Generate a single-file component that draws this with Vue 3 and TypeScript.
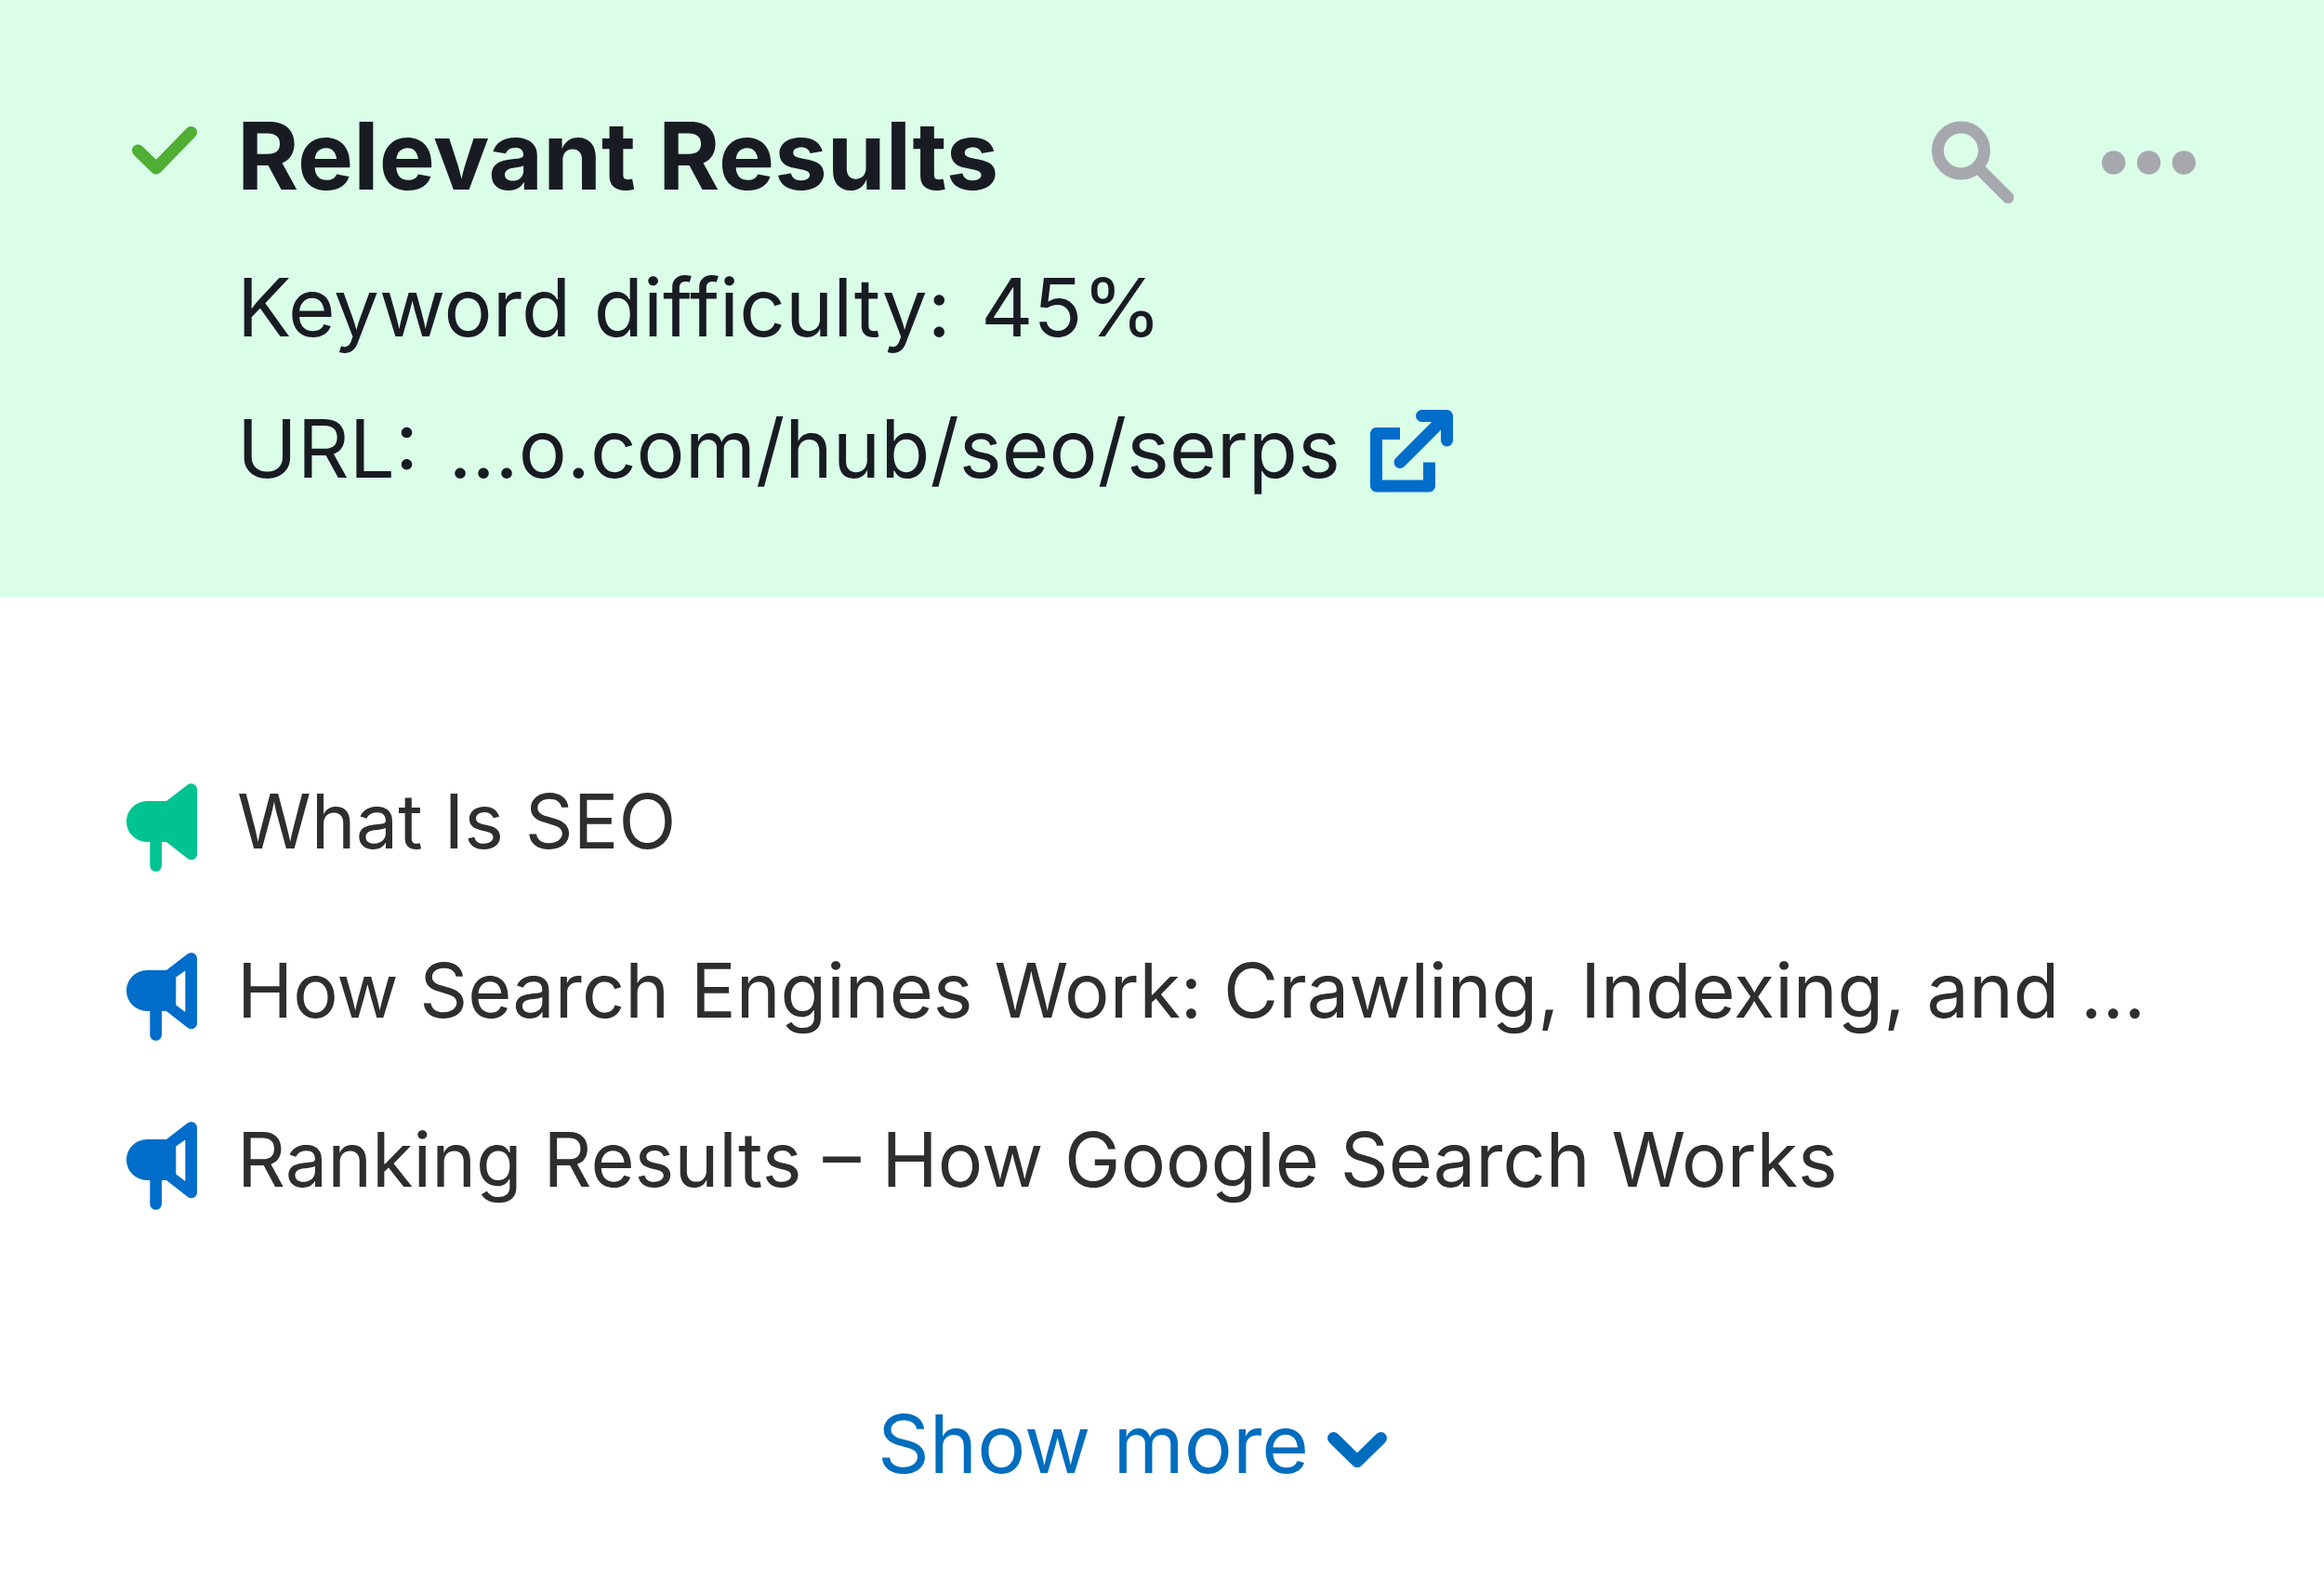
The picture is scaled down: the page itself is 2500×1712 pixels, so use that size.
<script setup lang="ts">
interface ResultItem {
  title: string
  filled: boolean
}

const items: ResultItem[] = [
  { title: 'What Is SEO', filled: true },
  { title: 'How Search Engines Work: Crawling, Indexing, and ...', filled: false },
  { title: 'Ranking Results – How Google Search Works', filled: false },
]
</script>

<template>
  <main class="card">
    <header class="head">
      <svg class="check" width="70" height="52" viewBox="0 0 70 52" aria-hidden="true">
        <path d="M6.5 26 26 45 63.500 6.500" />
      </svg>
      <div class="info">
        <h1>Relevant Results</h1>
        <p><span class="label">Keyword difficulty:</span> <span>45%</span></p>
        <p class="url">
          <span><span class="label">URL:</span> <span>...o.com/hub/seo/serps</span></span>
          <a href="#" aria-label="Open page">
            <svg width="89" height="89" viewBox="0 0 89 89" aria-hidden="true">
              <path class="frame" d="M32 25.500H6.500V82H63.500V56.500" />
              <path class="arrow" d="M32 56.500 82 6.500M55.500 6.500H82.500V33" />
            </svg>
          </a>
        </p>
      </div>
      <div class="actions">
        <button type="button" aria-label="Search">
          <svg class="search" width="89" height="90" viewBox="0 0 89 90" aria-hidden="true">
            <circle cx="31.500" cy="32" r="25" />
            <path d="M50 50.500 82 82.500" />
          </svg>
        </button>
        <button type="button" aria-label="More options">
          <svg class="dots" width="101" height="26" viewBox="0 0 101 26" aria-hidden="true">
            <circle cx="12.700" cy="13" r="12.700" />
            <circle cx="50.500" cy="13" r="12.700" />
            <circle cx="88.300" cy="13" r="12.700" />
          </svg>
        </button>
      </div>
    </header>

    <ul class="list">
      <li v-for="item in items" :key="item.title" :class="{ filled: item.filled }">
        <svg class="horn" width="76" height="95" viewBox="0 0 76 95" aria-hidden="true">
          <path d="M22 19H43L66 1.300C70-1.500 76 1 76 6.500V76C76 81.500 70 84 66 81L43 63H38V88.500A6.350 6.350 0 0 1 25.300 88.500V63H22A22 22 0 0 1 22 19Z" />
          <path v-if="!item.filled" class="hole" d="M53.300 26.500 63.300 19.500V64L53.300 56.500Z" />
        </svg>
        <span>{{ item.title }}</span>
      </li>
    </ul>

    <footer class="foot">
      <button class="more" type="button">
        <span>Show more</span>
        <svg width="64" height="39" viewBox="0 0 64 39" aria-hidden="true">
          <path d="M6.500 6.500 32 31.500 57.500 6.500" />
        </svg>
      </button>
    </footer>
  </main>
</template>

<style>
body {
  margin: 0;
  background: #fff;
}
</style>

<style scoped>
.card {
  font-family: Inter, sans-serif;
  font-weight: 400;
  color: #191b23;
}

svg {
  display: block;
  flex: none;
}

button {
  padding: 0;
  border: 0;
  background: none;
  font: inherit;
  cursor: pointer;
}

.head {
  display: flex;
  align-items: flex-start;
  padding: 107px 138px 84px 142px;
  background: #dafee8;
}

.check {
  margin: 29px 43px 0 0;
  fill: none;
  stroke: #4fae33;
  stroke-width: 13;
  stroke-linecap: round;
  stroke-linejoin: round;
}

.info {
  flex: 1;
}

h1 {
  margin: 0 0 28px;
  font-size: 101px;
  line-height: 120px;
  font-weight: 700;
}

p {
  margin: 0;
  font-size: 87px;
  line-height: 152px;
}

.label {
  margin-right: 8px;
}

.url {
  display: flex;
  align-items: center;
  gap: 32px;
}

.url a {
  margin-top: 4px;
}

.url path {
  fill: none;
  stroke: #006dca;
  stroke-width: 13;
  stroke-linejoin: round;
}

.url .arrow {
  stroke-linecap: round;
}

.actions {
  display: flex;
  align-items: center;
  gap: 94px;
  padding-top: 23px;
}

.search {
  fill: none;
  stroke: #a7a8ae;
  stroke-width: 13;
  stroke-linecap: round;
}

.dots {
  fill: #a7a8ae;
}

.list {
  margin: 0;
  padding: 150px 0 0 136px;
  list-style: none;
  color: #2e2e2f;
}

.list li {
  display: flex;
  align-items: center;
  gap: 43px;
  font-size: 81px;
  line-height: 182px;
  white-space: nowrap;
}

.horn {
  margin-top: 13px;
  fill: #006dca;
}

.filled .horn {
  fill: #00c392;
}

.horn .hole {
  fill: #fff;
}

.foot {
  display: flex;
  justify-content: center;
  padding: 155px 64px 98px 0;
}

.more {
  display: flex;
  align-items: center;
  gap: 20px;
  color: #006dbf;
  font-size: 87px;
  line-height: 120px;
}

.more svg {
  margin-top: 12px;
  fill: none;
  stroke: currentColor;
  stroke-width: 13;
  stroke-linecap: round;
  stroke-linejoin: round;
}
</style>
